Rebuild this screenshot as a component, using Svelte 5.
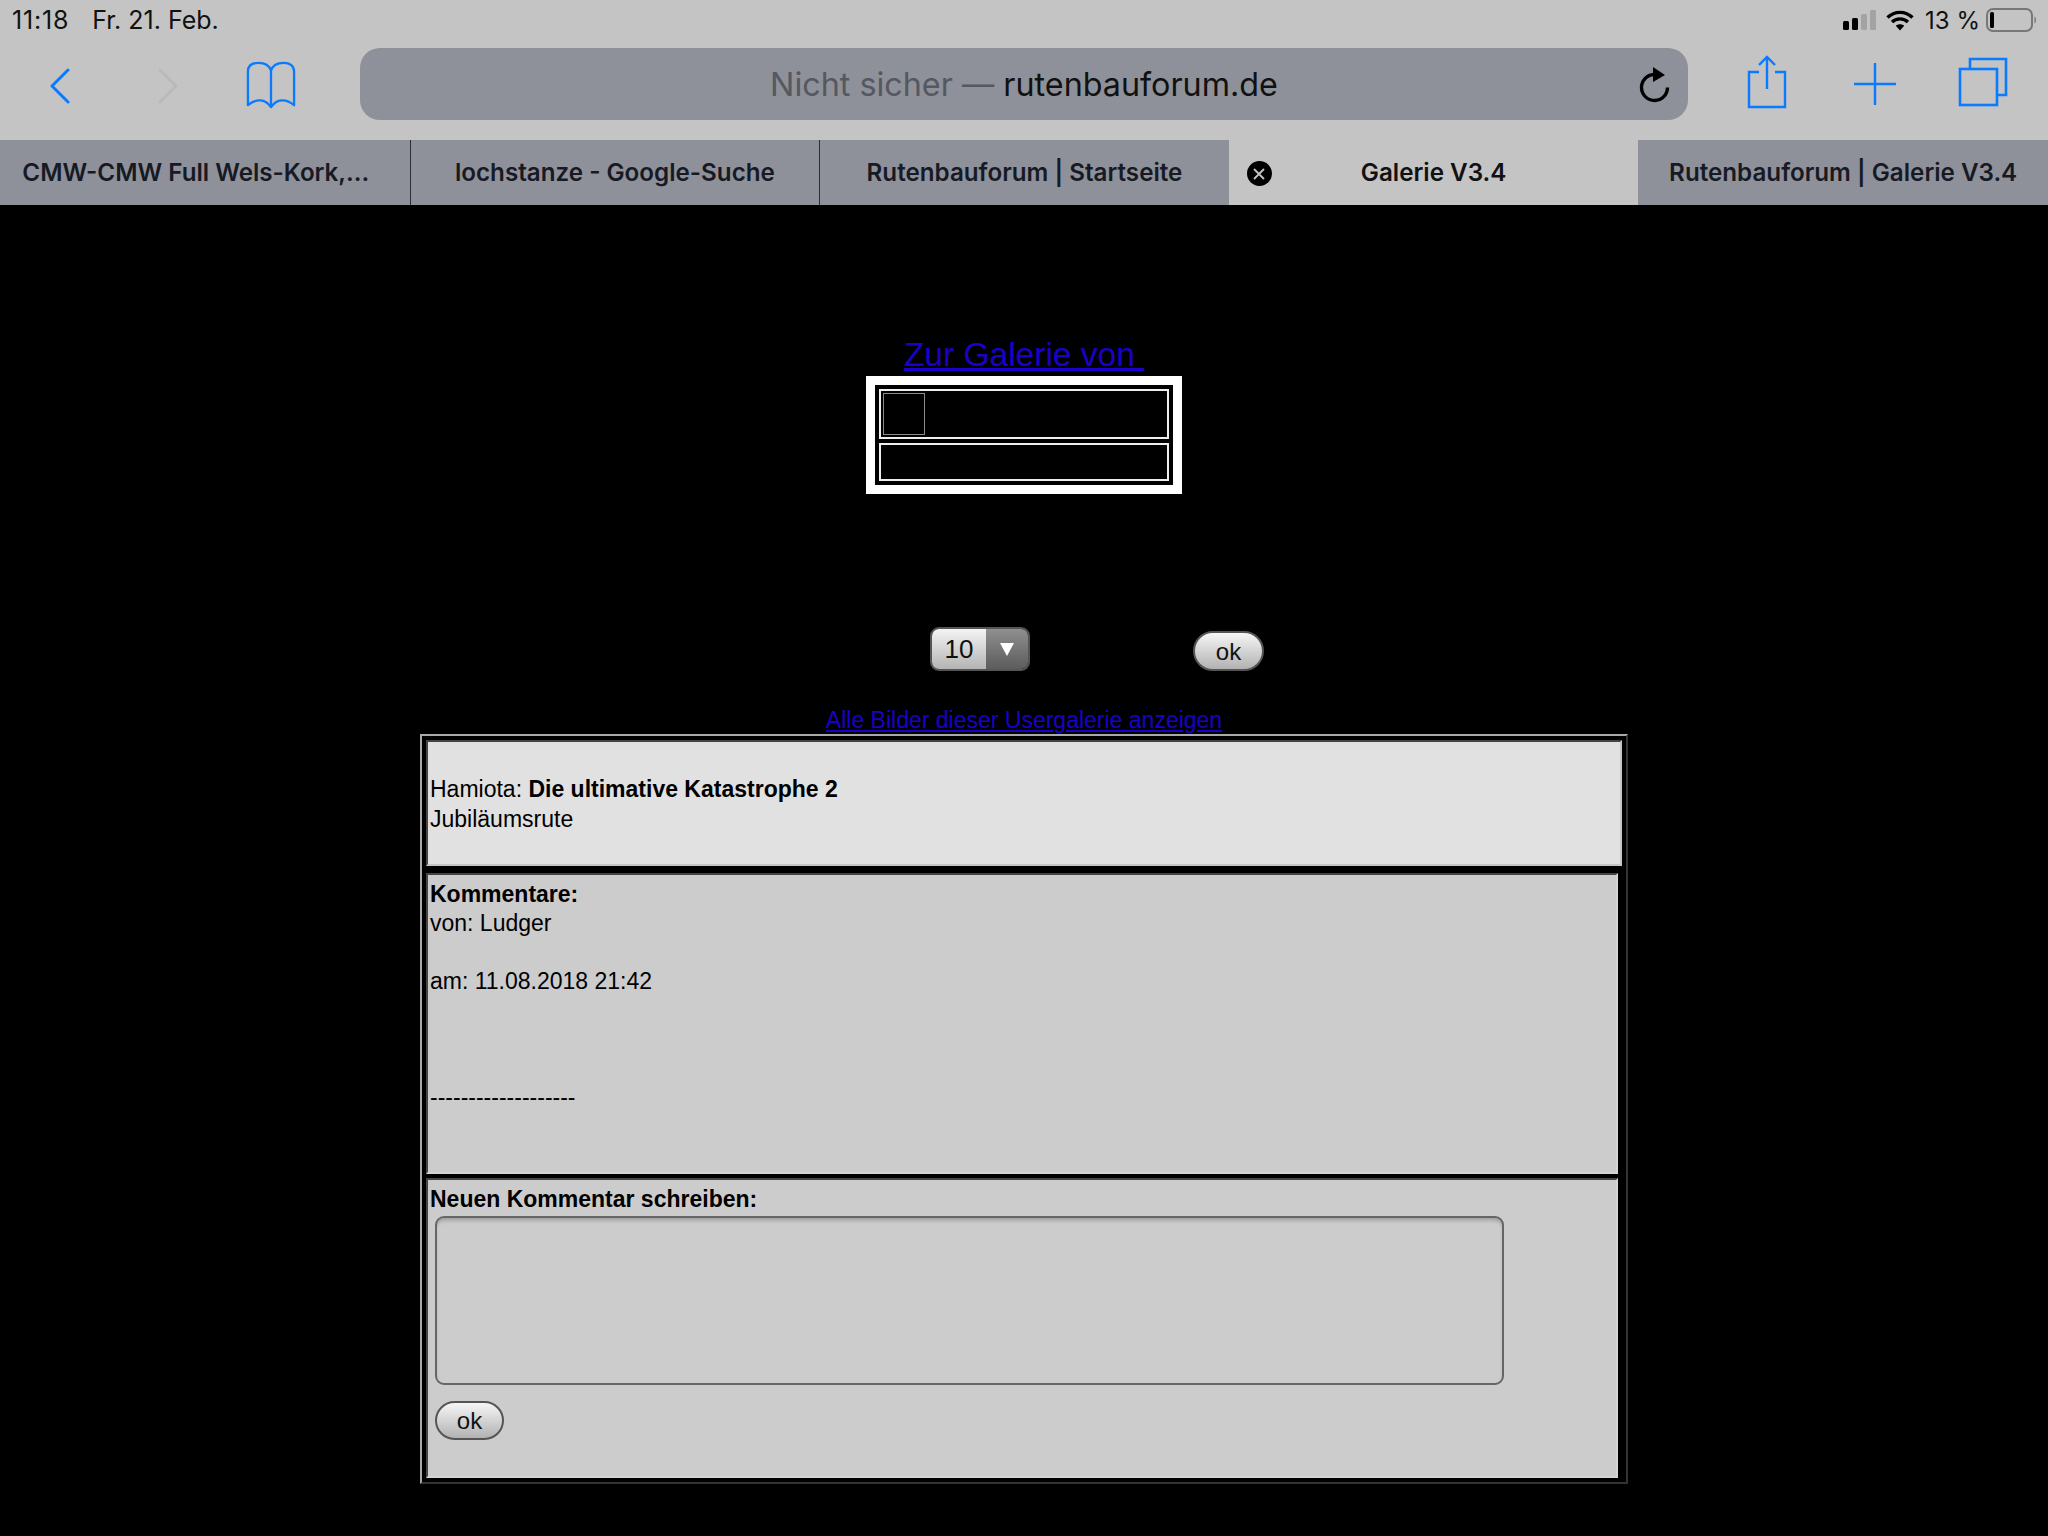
<script>
    const tabs = [
        { title: "CMW-CMW Full Wels-Kork,..." },
        { title: "lochstanze - Google-Suche" },
        { title: "Rutenbauforum | Startseite" },
        { title: "Galerie V3.4", active: true },
        { title: "Rutenbauforum | Galerie V3.4" },
    ];
</script>

<div class="chrome">
    <div class="status">
        <span class="time">11:18</span>
        <span class="date">Fr. 21. Feb.</span>
        <span class="spacer"></span>
        <svg class="signal" width="33" height="20" viewBox="0 0 33 20">
            <rect x="0" y="11" width="6" height="9" rx="1.5" fill="#000" />
            <rect x="9" y="8" width="6" height="12" rx="1.5" fill="#000" />
            <rect x="18" y="4" width="6" height="16" rx="1.5" fill="#a3a3a3" />
            <rect x="27" y="0" width="6" height="20" rx="1.5" fill="#a3a3a3" />
        </svg>
        <svg class="wifi" width="28" height="21" viewBox="0 0 28 21" fill="none" stroke="#000" stroke-width="3.4">
            <path d="M1.5 7.5 C8.5 0.6 19.5 0.6 26.5 7.5" />
            <path d="M6 12 C10.5 7.8 17.5 7.8 22 12" />
            <path d="M14 20.5 L9.8 15.8 C12 13.8 16 13.8 18.2 15.8 Z" fill="#000" stroke="none" />
        </svg>
        <span class="percent">13 %</span>
        <svg class="battery" width="51" height="24" viewBox="0 0 51 24">
            <rect x="1" y="1" width="45" height="22" rx="6" fill="none" stroke="#777" stroke-width="2" />
            <rect x="4" y="4" width="4" height="16" rx="1.5" fill="#000" />
            <path d="M48.5 8.5 C50.5 9.5 50.5 14.5 48.5 15.5 Z" fill="#777" />
        </svg>
    </div>

    <div class="toolbar">
        <svg class="back" width="20" height="36" viewBox="0 0 20 36" fill="none" stroke="#0a7aff" stroke-width="3" stroke-linecap="round" stroke-linejoin="round">
            <path d="M18 2 L2 18 L18 34" />
        </svg>
        <svg class="forward" width="20" height="36" viewBox="0 0 20 36" fill="none" stroke="#b9b9b9" stroke-width="3" stroke-linecap="round" stroke-linejoin="round">
            <path d="M2 2 L18 18 L2 34" />
        </svg>
        <svg class="book" width="50" height="50" viewBox="0 0 52 50" fill="none" stroke="#0a7aff" stroke-width="2.4" stroke-linejoin="round">
            <path d="M26 10 C24 4 19 2 13 2 C6 2 2 5 2 11 L2 46 C10 39 20 39 26 48 C32 39 42 39 50 46 L50 11 C50 5 46 2 39 2 C33 2 28 4 26 10 L26 48" />
        </svg>
        <div class="urlbar">
            <span class="url"><span class="insecure">Nicht sicher —</span> rutenbauforum.de</span>
            <svg class="reload" width="32" height="36" viewBox="0 0 32 36" fill="none">
                <path d="M16 7.5 A13 13 0 1 0 29.5 20.5" stroke="#000" stroke-width="3.4" />
                <path d="M15 0 L27 8 L15 15 Z" fill="#000" />
            </svg>
        </div>
        <svg class="share" width="40" height="54" viewBox="0 0 40 54" fill="none" stroke="#0a7aff" stroke-width="2.4">
            <path d="M12 17 H2 V52 H38 V17 H28" />
            <path d="M20 2 V34" />
            <path d="M12 10 L20 2 L28 10" />
        </svg>
        <svg class="plus" width="42" height="42" viewBox="0 0 42 42" stroke="#0a7aff" stroke-width="2.4">
            <path d="M21 0 V42 M0 21 H42" />
        </svg>
        <svg class="pages" width="50" height="50" viewBox="0 0 50 50" fill="none" stroke="#0a7aff" stroke-width="2.6">
            <path d="M12 11 V2 H48 V38 H39" />
            <rect x="2" y="12" width="37" height="36" />
        </svg>
    </div>

    <div class="tabs">
        {#each tabs as tab}
            <div class="tab" class:active={tab.active}>
                {#if tab.active}
                    <span class="close">
                        <svg width="12" height="12" viewBox="0 0 12 12" stroke="#c4c4c4" stroke-width="1.8" stroke-linecap="round">
                            <path d="M1.5 1.5 L10.5 10.5 M10.5 1.5 L1.5 10.5" />
                        </svg>
                    </span>
                {/if}
                {tab.title}
            </div>
        {/each}
    </div>
</div>

<main class="page">
    <a class="gallery-link" href="#top">Zur Galerie von&nbsp;</a>

    <div class="gallery">
        <div class="gallery-cell first">
            <div class="thumb"></div>
        </div>
        <div class="gallery-cell second"></div>
    </div>

    <div class="controls">
        <div class="select">
            <span class="select-value">10</span>
            <span class="select-arrow"></span>
        </div>
        <button class="ok">ok</button>
    </div>

    <a class="all-link" href="#top">Alle Bilder dieser Usergalerie anzeigen</a>

    <div class="panel">
        <div class="cell head">
            Hamiota: <b>Die ultimative Katastrophe 2</b><br />
            Jubiläumsrute
        </div>
        <div class="cell comments">
            <b>Kommentare:</b><br />
            von: Ludger<br />
            <br />
            am: 11.08.2018 21:42<br />
            <br />
            <br />
            <br />
            -------------------
        </div>
        <div class="cell write">
            <b>Neuen Kommentar schreiben:</b>
            <textarea class="comment-box"></textarea>
            <button class="ok small">ok</button>
        </div>
    </div>
</main>

<style>
    :global(body) {
        background: #000;
        margin: 0;
    }

    .chrome {
        background: #c4c4c4;
        font-family: Inter, "Liberation Sans", sans-serif;
        color: #111;
    }

    .status {
        display: flex;
        align-items: center;
        height: 40px;
        padding: 0 11px 0 12px;
        font-size: 25px;
        box-sizing: border-box;
    }

    .time {
        letter-spacing: 0.8px;
    }

    .date {
        margin-left: 23px;
    }

    .spacer {
        flex: 1;
    }

    .wifi {
        margin-left: 10px;
    }

    .percent {
        margin-left: 11px;
        font-size: 24px;
    }

    .battery {
        margin-left: 6px;
    }

    .toolbar {
        display: flex;
        align-items: center;
        height: 100px;
        box-sizing: border-box;
        padding-bottom: 12px;
    }

    .back {
        margin: 3px 0 0 50px;
    }

    .forward {
        margin: 3px 0 0 88px;
    }

    .book {
        margin: 1px 0 0 68px;
    }

    .urlbar {
        display: flex;
        align-items: center;
        justify-content: center;
        position: relative;
        width: 1328px;
        height: 72px;
        margin-left: 64px;
        background: #8e9199;
        border-radius: 20px;
        font-size: 32.3px;
    }

    .insecure {
        color: #55585f;
    }

    .reload {
        position: absolute;
        right: 18px;
        top: 19px;
    }

    .share {
        margin: -4px 0 0 59px;
    }

    .plus {
        margin-left: 67px;
    }

    .pages {
        margin: -4px 0 0 62px;
    }

    .tabs {
        display: flex;
        height: 65px;
    }

    .tab {
        flex: 0 0 20%;
        box-sizing: border-box;
        display: flex;
        align-items: center;
        justify-content: center;
        position: relative;
        background: #8e9199;
        color: #171a24;
        font-size: 24.2px;
        font-weight: 600;
        white-space: nowrap;
    }

    .tab:first-child {
        padding-right: 18px;
    }

    .tab + .tab {
        border-left: 1px solid #2b2d33;
    }

    .tab.active {
        background: #c4c4c4;
        color: #111;
        border-left: none;
    }

    .tab.active + .tab {
        border-left: none;
    }

    .close {
        position: absolute;
        left: 18px;
        top: 21px;
        width: 25px;
        height: 25px;
        display: flex;
        align-items: center;
        justify-content: center;
        border-radius: 50%;
        background: #000;
    }

    .page {
        display: flex;
        flex-direction: column;
        align-items: center;
        background: #000;
        height: 1331px;
        font-family: "Liberation Sans", Arial, sans-serif;
        color: #000;
    }

    a {
        color: #1a00c8;
    }

    .gallery-link {
        margin-top: 128px;
        font-size: 33.5px;
        line-height: 43px;
    }

    .gallery {
        width: 316px;
        height: 118px;
        box-sizing: border-box;
        border: 9px solid #fff;
        padding: 4px;
        display: flex;
        flex-direction: column;
        gap: 4px;
    }

    .gallery-cell {
        border: 2px solid #eee;
        box-sizing: border-box;
    }

    .gallery-cell.first {
        height: 50px;
        padding: 2px;
    }

    .gallery-cell.second {
        height: 38px;
    }

    .thumb {
        width: 42px;
        height: 42px;
        box-sizing: border-box;
        border: 1px solid #8a8a8a;
    }

    .controls {
        display: flex;
        align-items: flex-end;
        gap: 163px;
        margin: 133px 0 0 146px;
    }

    .select {
        display: flex;
        width: 100px;
        height: 44px;
        box-sizing: border-box;
        border: 2px solid #555;
        border-radius: 9px;
        overflow: hidden;
        font-size: 26px;
    }

    .select-value {
        flex: 1;
        display: flex;
        align-items: center;
        justify-content: center;
        padding-top: 1px;
        background: linear-gradient(#f4f4f4, #b4b4b4);
        color: #111;
    }

    .select-arrow {
        width: 42px;
        display: flex;
        align-items: center;
        justify-content: center;
        background: linear-gradient(#8f8f8f, #5c5c5c);
    }

    .select-arrow::after {
        content: "";
        border-left: 7.5px solid transparent;
        border-right: 7.5px solid transparent;
        border-top: 13px solid #fff;
    }

    .ok {
        width: 71px;
        height: 40px;
        padding: 2px 0 0;
        border: 2px solid #555;
        border-radius: 20px;
        background: linear-gradient(#f6f6f6, #b2b2b2);
        font-family: inherit;
        font-size: 24px;
        color: #111;
    }

    .ok.small {
        display: block;
        width: 69px;
        height: 39px;
        padding: 0;
        margin: 16px 0 0 5px;
    }

    .all-link {
        margin-top: 36px;
        font-size: 23px;
        line-height: 27px;
    }

    .panel {
        width: 1208px;
        height: 750px;
        box-sizing: border-box;
        display: flex;
        flex-direction: column;
        align-items: flex-start;
        padding: 4px;
        border: 2px solid;
        border-color: #aaa #333 #333 #aaa;
    }

    .cell {
        box-sizing: border-box;
        border: 2px solid;
        border-color: #444 #d4d4d4 #d4d4d4 #444;
        background: #cccccc;
        padding: 5px 2px 0;
        font-size: 23px;
        line-height: 29px;
        color: #000;
    }

    .cell.head {
        width: 1196px;
        height: 126px;
        padding-top: 32px;
        line-height: 30px;
        background: #e1e1e1;
        border-color: #444 #c6c6c6 #c6c6c6 #444;
    }

    .cell.comments {
        width: 1192px;
        height: 301px;
        margin-top: 7px;
    }

    .cell.write {
        width: 1192px;
        height: 300px;
        margin-top: 4px;
    }

    .comment-box {
        display: block;
        box-sizing: border-box;
        width: 1069px;
        height: 169px;
        margin: 2px 0 0 5px;
        background: #cccccc;
        border: 2px solid #666;
        border-radius: 9px;
        box-shadow: inset 0 4px 4px -2px #999;
        outline: none;
        resize: none;
    }
</style>
